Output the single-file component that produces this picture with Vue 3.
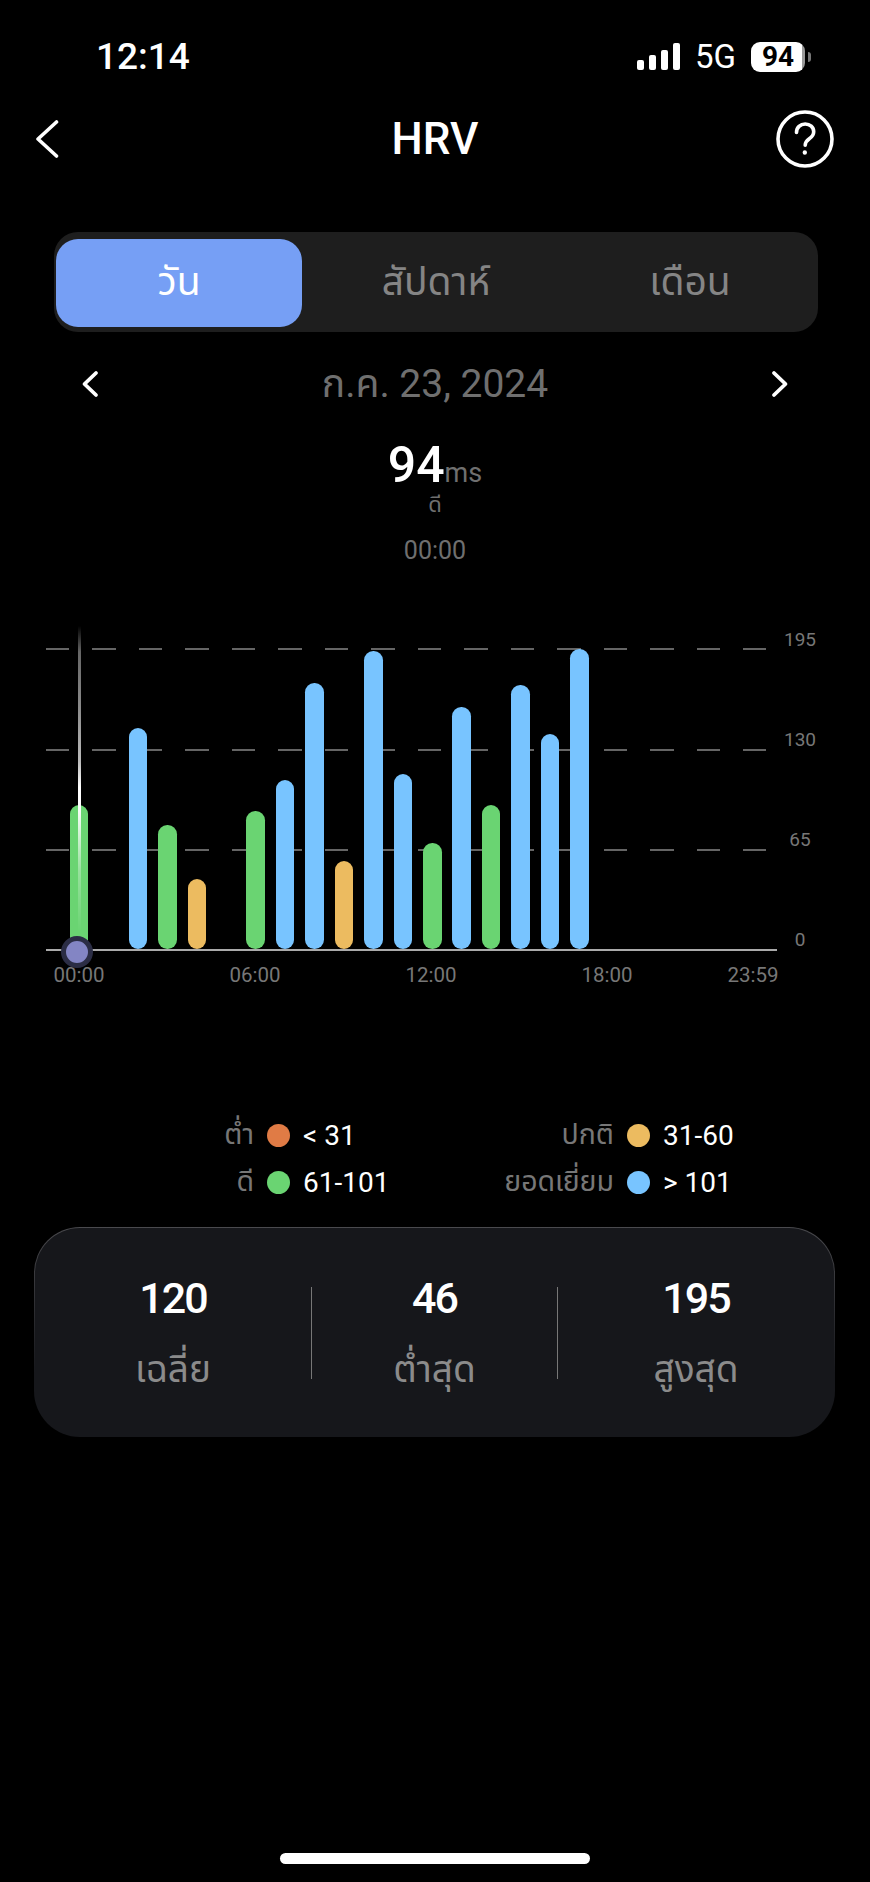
<script setup>
const bars = [
  { hour: 0, top: 805, tone: 'green' },
  { hour: 2, top: 728, tone: 'blue' },
  { hour: 3, top: 825, tone: 'green' },
  { hour: 4, top: 879, tone: 'yellow' },
  { hour: 6, top: 811, tone: 'green' },
  { hour: 7, top: 780, tone: 'blue' },
  { hour: 8, top: 683, tone: 'blue' },
  { hour: 9, top: 861, tone: 'yellow' },
  { hour: 10, top: 651, tone: 'blue' },
  { hour: 11, top: 774, tone: 'blue' },
  { hour: 12, top: 843, tone: 'green' },
  { hour: 13, top: 707, tone: 'blue' },
  { hour: 14, top: 805, tone: 'green' },
  { hour: 15, top: 685, tone: 'blue' },
  { hour: 16, top: 734, tone: 'blue' },
  { hour: 17, top: 649, tone: 'blue' },
]

const baseline = 949
const slots = Array.from({ length: 24 }, (_, hour) => {
  const bar = bars.find((item) => item.hour === hour)
  return { hour, tone: bar?.tone, height: bar ? baseline - bar.top : 0 }
})

const yLabels = ['195', '130', '65', '0']
const xLabels = ['00:00', '06:00', '12:00', '18:00', '23:59']

const legend = [
  { label: 'ต่ำ', tone: 'orange', range: '< 31' },
  { label: 'ปกติ', tone: 'yellow', range: '31-60' },
  { label: 'ดี', tone: 'green', range: '61-101' },
  { label: 'ยอดเยี่ยม', tone: 'blue', range: '> 101' },
]

const stats = [
  { value: '120', label: 'เฉลี่ย' },
  { value: '46', label: 'ต่ำสุด' },
  { value: '195', label: 'สูงสุด' },
]
</script>

<template>
  <div class="screen">
    <header class="status">
      <span class="status__time">12:14</span>
      <div class="status__right">
        <svg class="status__signal" width="44" height="28" viewBox="0 0 44 28" fill="#fff">
          <rect x="1" y="17" width="7" height="10" rx="2" />
          <rect x="13" y="12" width="7" height="15" rx="2" />
          <rect x="25" y="7" width="7" height="20" rx="2" />
          <rect x="37" y="0" width="7" height="27" rx="2" />
        </svg>
        <span class="status__net">5G</span>
        <span class="status__battery">94</span>
        <span class="status__nub"></span>
      </div>
    </header>

    <nav class="topbar">
      <svg width="24" height="38" viewBox="0 0 24 38" fill="none" stroke="#fff" stroke-width="3.6" stroke-linecap="round" stroke-linejoin="round">
        <path d="M21.5 2 3 19l18.5 17" />
      </svg>
      <h1 class="topbar__title">HRV</h1>
      <svg class="topbar__help" width="60" height="60" viewBox="0 0 60 60" fill="none" stroke="#fff" stroke-width="3.6" stroke-linecap="round">
        <circle cx="30" cy="30" r="27" />
        <path d="M21.5 23.5c0-5 3.8-8.5 8.7-8.5 4.8 0 8.5 3.2 8.5 7.7 0 3.3-1.8 5.2-4.4 7-2.6 1.8-4.1 3.4-4.1 6.6" />
        <circle cx="29.8" cy="43.5" r="1.4" fill="#fff" stroke-width="1.6" />
      </svg>
    </nav>

    <div class="tabs">
      <button type="button" class="tabs__item is-active">วัน</button>
      <button type="button" class="tabs__item">สัปดาห์</button>
      <button type="button" class="tabs__item tabs__item--last">เดือน</button>
    </div>

    <div class="datebar">
      <svg width="18" height="28" viewBox="0 0 18 28" fill="none" stroke="#fff" stroke-width="3.8" stroke-linecap="round" stroke-linejoin="round">
        <path d="M15 3 3.5 14 15 25" />
      </svg>
      <span class="datebar__text">ก.ค. 23, 2024</span>
      <svg width="18" height="28" viewBox="0 0 18 28" fill="none" stroke="#fff" stroke-width="3.8" stroke-linecap="round" stroke-linejoin="round">
        <path d="M3 3l11.5 11L3 25" />
      </svg>
    </div>

    <div class="reading">
      <div class="reading__value">94<span class="reading__unit">ms</span></div>
      <div class="reading__grade">ดี</div>
      <div class="reading__time">00:00</div>
    </div>

    <section class="chart">
      <div class="chart__plot">
        <div class="chart__grid">
          <i v-for="n in 3" :key="n" class="chart__dash"></i>
        </div>
        <div class="chart__bars">
          <div v-for="slot in slots" :key="slot.hour" class="chart__slot">
            <span
              v-if="slot.height"
              class="chart__bar"
              :class="`tone-${slot.tone}`"
              :style="{ height: `${slot.height}px` }"
            ></span>
          </div>
        </div>
        <div class="chart__cursor"></div>
        <div class="chart__knob"></div>
        <div class="chart__ylabels">
          <span v-for="label in yLabels" :key="label">{{ label }}</span>
        </div>
      </div>
      <div class="chart__xlabels">
        <span v-for="label in xLabels" :key="label">{{ label }}</span>
      </div>
    </section>

    <div class="legend">
      <div v-for="item in legend" :key="item.range" class="legend__item">
        <span class="legend__label">{{ item.label }}</span>
        <span class="legend__dot" :class="`tone-${item.tone}`"></span>
        <span class="legend__range">{{ item.range }}</span>
      </div>
    </div>

    <section class="stats">
      <div v-for="stat in stats" :key="stat.label" class="stats__col">
        <strong class="stats__value">{{ stat.value }}</strong>
        <span class="stats__label">{{ stat.label }}</span>
      </div>
    </section>

    <div class="home"></div>
  </div>
</template>

<style>
html,
body {
  margin: 0;
  background: #000;
}
</style>

<style scoped>
.screen {
  position: relative;
  width: 870px;
  height: 1882px;
  overflow: hidden;
  background: #000;
  color: #fff;
  font-family: Roboto, "Noto Sans", "Noto Sans Thai", "Liberation Sans", sans-serif;
}

.status {
  display: flex;
  justify-content: space-between;
  align-items: center;
  height: 30px;
  padding: 42px 59px 0 96px;
}

.status__time {
  font-size: 37px;
  font-weight: 500;
  line-height: 30px;
}

.status__right {
  display: flex;
  align-items: center;
}

.status__signal {
  margin-right: 15px;
}

.status__net {
  width: 39px;
  margin-right: 17px;
  font-size: 33px;
  line-height: 30px;
  white-space: nowrap;
}

.status__battery {
  width: 54px;
  height: 30px;
  border-radius: 9px;
  background: linear-gradient(to right, #fff 94%, #9a9a9a 94%);
  color: #000;
  font-size: 28px;
  font-weight: 700;
  line-height: 30px;
  text-align: center;
}

.status__nub {
  width: 3px;
  height: 10px;
  margin-left: 3px;
  border-radius: 0 3px 3px 0;
  background: #777;
}

.topbar {
  display: grid;
  grid-template-columns: 1fr auto 1fr;
  align-items: center;
  height: 60px;
  margin-top: 37px;
  padding: 0 35px;
}

.topbar__title {
  margin: 0;
  font-size: 44px;
  font-weight: 500;
  line-height: 60px;
}

.topbar__help {
  justify-self: end;
}

.tabs {
  display: grid;
  grid-template-columns: 246px 268px 246px;
  box-sizing: border-box;
  width: 764px;
  height: 100px;
  margin: 63px 0 0 54px;
  padding: 7px 2px 5px;
  border-radius: 24px;
  background: #1e1e1e;
}

.tabs__item {
  padding: 0;
  border: 0;
  border-radius: 22px;
  background: transparent;
  color: #858585;
  font: inherit;
  font-size: 39px;
}

.tabs__item--last {
  padding-right: 6px;
}

.tabs__item.is-active {
  background: #769ff5;
  color: #fff;
}

.datebar {
  display: flex;
  justify-content: space-between;
  align-items: center;
  height: 50px;
  margin-top: 27px;
  padding: 0 81px;
}

.datebar__text {
  color: #6f6f6f;
  font-size: 39px;
  line-height: 50px;
}

.reading {
  display: flex;
  flex-direction: column;
  align-items: center;
  margin-top: 26px;
}

.reading__value {
  height: 60px;
  font-size: 50px;
  font-weight: 500;
  line-height: 60px;
}

.reading__unit {
  color: #6f6f6f;
  font-size: 27px;
  font-weight: 400;
}

.reading__grade {
  margin-top: -5px;
  color: #6f6f6f;
  font-size: 22px;
  line-height: 30px;
}

.reading__time {
  margin-top: 16px;
  color: #6f6f6f;
  font-size: 25px;
  line-height: 30px;
}

.chart {
  margin: 82px 0 0 46px;
  width: 731px;
}

.chart__plot {
  position: relative;
  height: 301px;
  border-bottom: 2px solid #aaa;
}

.chart__grid {
  display: flex;
  flex-direction: column;
  justify-content: space-between;
  width: 720px;
  height: 203px;
}

.chart__dash {
  height: 2px;
  background: repeating-linear-gradient(to right, #656565 0 23.5px, transparent 23.5px 46.5px);
}

.chart__bars {
  position: absolute;
  inset: 0 0 0 18.3px;
  display: flex;
  align-items: flex-end;
}

.chart__slot {
  flex: 0 0 29.45px;
  display: flex;
  justify-content: center;
}

.chart__bar {
  width: 18.5px;
  border-radius: 9.25px;
}

.chart__cursor {
  position: absolute;
  left: 31.5px;
  top: -22px;
  bottom: 0;
  width: 3px;
  background: linear-gradient(to bottom, transparent 0, #666 8%, #8a8a8a 25%, #bbb 42%, #fff 50%, #fff 56%, rgba(255, 255, 255, 0.3) 76%, transparent 95%);
}

.chart__knob {
  position: absolute;
  left: 15px;
  bottom: -19px;
  box-sizing: border-box;
  width: 32px;
  height: 32px;
  border: 5px solid #2b2d45;
  border-radius: 50%;
  background: #8385c4;
}

.chart__ylabels {
  position: absolute;
  left: 740px;
  top: -21.5px;
  display: flex;
  flex-direction: column;
  align-items: center;
  gap: 75.3px;
  width: 28px;
  color: #777;
  font-size: 19px;
  line-height: 25px;
}

.chart__xlabels {
  display: grid;
  grid-template-columns: repeat(4, 176px) 1fr;
  margin: 12px -1.5px 0 -55px;
  color: #777;
  font-size: 20.5px;
  line-height: 24px;
  text-align: center;
}

.chart__xlabels span:last-child {
  text-align: right;
}

.legend {
  display: grid;
  grid-template-columns: 360px 360px;
  row-gap: 11px;
  margin-top: 127px;
}

.legend__item {
  display: grid;
  grid-template-columns: 254px 23px auto;
  column-gap: 13px;
  align-items: center;
  height: 36px;
  white-space: nowrap;
}

.legend__label {
  color: #777;
  font-size: 28.5px;
  text-align: right;
}

.legend__dot {
  width: 23px;
  height: 23px;
  border-radius: 50%;
}

.legend__range {
  font-size: 28px;
}

.stats {
  display: grid;
  grid-template-columns: 1fr 247px 1fr;
  box-sizing: border-box;
  width: 801px;
  height: 210px;
  margin: 30px 0 0 34px;
  padding-top: 59px;
  border-radius: 46px;
  border: 1px solid transparent;
  background:
    linear-gradient(#16171b, #16171b) padding-box,
    linear-gradient(to bottom, #4a4a4e, #16171b 70%) border-box;
}

.stats__col {
  display: flex;
  flex-direction: column;
  align-items: center;
  height: 92px;
}

.stats__col:nth-child(2) {
  border-left: 1.5px solid #777;
  border-right: 1.5px solid #777;
}

.stats__value {
  margin-top: -9px;
  font-size: 43px;
  font-weight: 500;
  line-height: 40px;
  letter-spacing: -2px;
}

.stats__label {
  margin-top: 27px;
  color: #8b8b8b;
  font-size: 37px;
  line-height: 50px;
}

.home {
  position: absolute;
  left: 280px;
  bottom: 18px;
  width: 310px;
  height: 11px;
  border-radius: 6px;
  background: #fff;
}

.tone-blue {
  background: #78c4ff;
}

.tone-green {
  background: #6ad472;
}

.tone-yellow {
  background: #ecbb60;
}

.tone-orange {
  background: #e07b45;
}
</style>
